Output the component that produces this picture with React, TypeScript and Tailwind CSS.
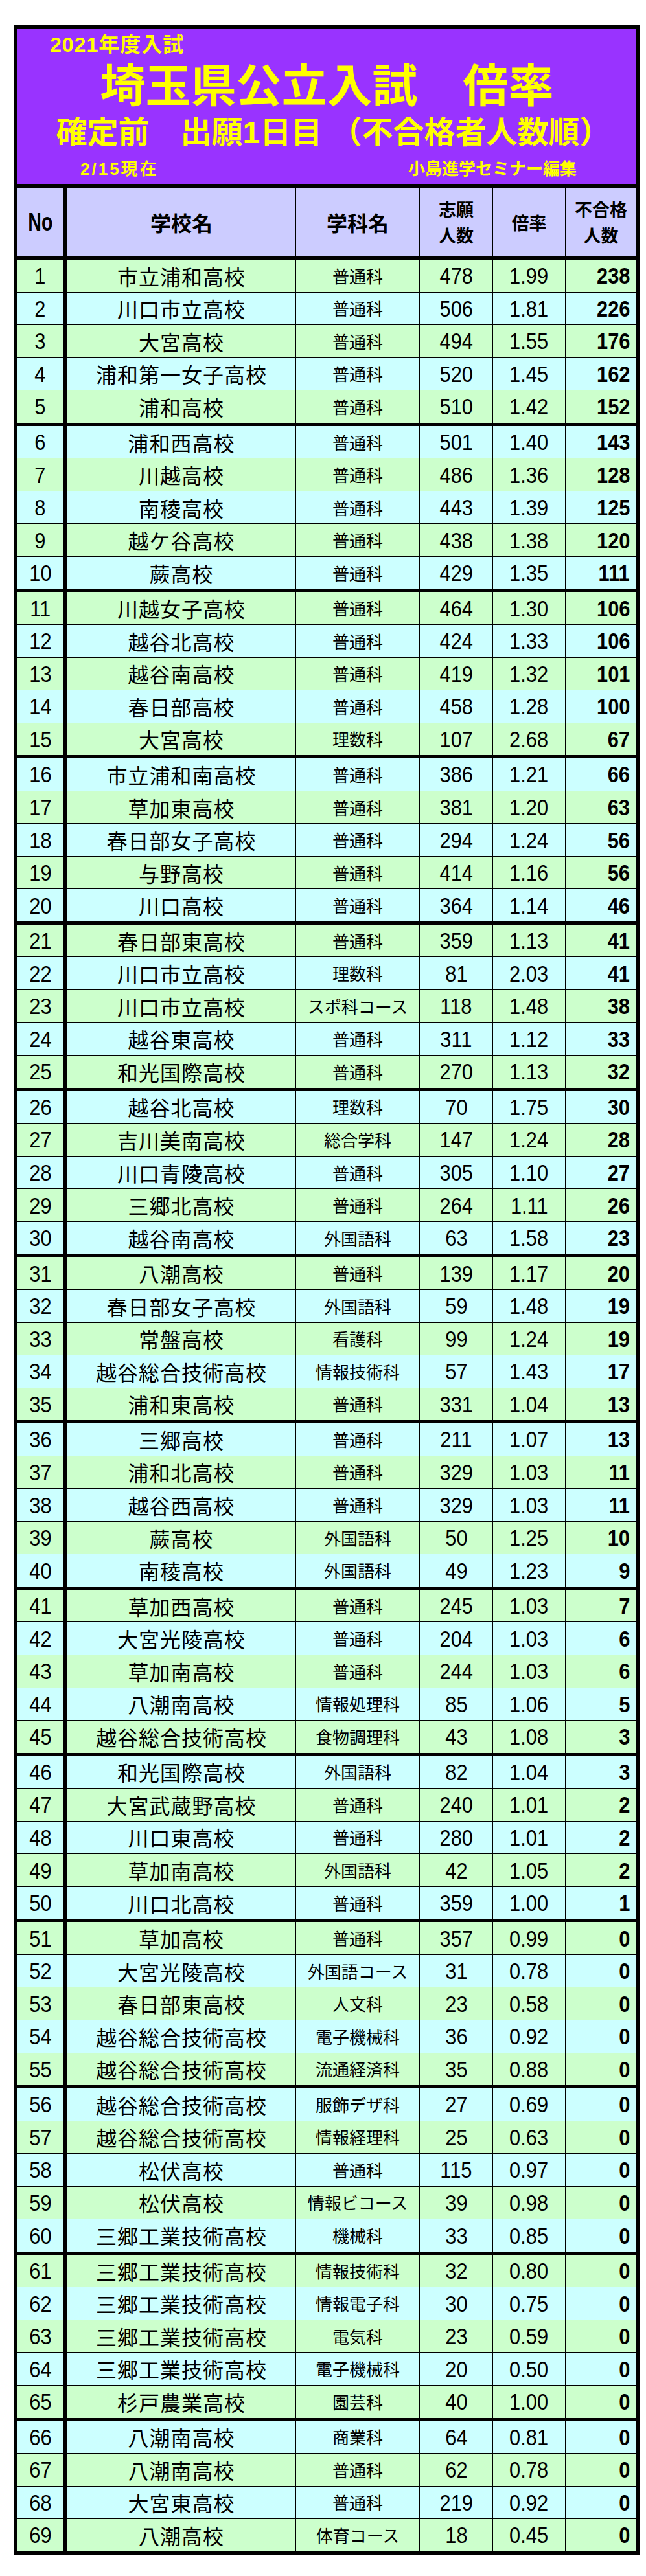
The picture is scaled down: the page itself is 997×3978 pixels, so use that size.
type Row = [string, string, number, string, number]

const rows: Row[] = [
  ["市立浦和高校", "普通科", 478, "1.99", 238],
  ["川口市立高校", "普通科", 506, "1.81", 226],
  ["大宮高校", "普通科", 494, "1.55", 176],
  ["浦和第一女子高校", "普通科", 520, "1.45", 162],
  ["浦和高校", "普通科", 510, "1.42", 152],
  ["浦和西高校", "普通科", 501, "1.40", 143],
  ["川越高校", "普通科", 486, "1.36", 128],
  ["南稜高校", "普通科", 443, "1.39", 125],
  ["越ケ谷高校", "普通科", 438, "1.38", 120],
  ["蕨高校", "普通科", 429, "1.35", 111],
  ["川越女子高校", "普通科", 464, "1.30", 106],
  ["越谷北高校", "普通科", 424, "1.33", 106],
  ["越谷南高校", "普通科", 419, "1.32", 101],
  ["春日部高校", "普通科", 458, "1.28", 100],
  ["大宮高校", "理数科", 107, "2.68", 67],
  ["市立浦和南高校", "普通科", 386, "1.21", 66],
  ["草加東高校", "普通科", 381, "1.20", 63],
  ["春日部女子高校", "普通科", 294, "1.24", 56],
  ["与野高校", "普通科", 414, "1.16", 56],
  ["川口高校", "普通科", 364, "1.14", 46],
  ["春日部東高校", "普通科", 359, "1.13", 41],
  ["川口市立高校", "理数科", 81, "2.03", 41],
  ["川口市立高校", "スポ科コース", 118, "1.48", 38],
  ["越谷東高校", "普通科", 311, "1.12", 33],
  ["和光国際高校", "普通科", 270, "1.13", 32],
  ["越谷北高校", "理数科", 70, "1.75", 30],
  ["吉川美南高校", "総合学科", 147, "1.24", 28],
  ["川口青陵高校", "普通科", 305, "1.10", 27],
  ["三郷北高校", "普通科", 264, "1.11", 26],
  ["越谷南高校", "外国語科", 63, "1.58", 23],
  ["八潮高校", "普通科", 139, "1.17", 20],
  ["春日部女子高校", "外国語科", 59, "1.48", 19],
  ["常盤高校", "看護科", 99, "1.24", 19],
  ["越谷総合技術高校", "情報技術科", 57, "1.43", 17],
  ["浦和東高校", "普通科", 331, "1.04", 13],
  ["三郷高校", "普通科", 211, "1.07", 13],
  ["浦和北高校", "普通科", 329, "1.03", 11],
  ["越谷西高校", "普通科", 329, "1.03", 11],
  ["蕨高校", "外国語科", 50, "1.25", 10],
  ["南稜高校", "外国語科", 49, "1.23", 9],
  ["草加西高校", "普通科", 245, "1.03", 7],
  ["大宮光陵高校", "普通科", 204, "1.03", 6],
  ["草加南高校", "普通科", 244, "1.03", 6],
  ["八潮南高校", "情報処理科", 85, "1.06", 5],
  ["越谷総合技術高校", "食物調理科", 43, "1.08", 3],
  ["和光国際高校", "外国語科", 82, "1.04", 3],
  ["大宮武蔵野高校", "普通科", 240, "1.01", 2],
  ["川口東高校", "普通科", 280, "1.01", 2],
  ["草加南高校", "外国語科", 42, "1.05", 2],
  ["川口北高校", "普通科", 359, "1.00", 1],
  ["草加高校", "普通科", 357, "0.99", 0],
  ["大宮光陵高校", "外国語コース", 31, "0.78", 0],
  ["春日部東高校", "人文科", 23, "0.58", 0],
  ["越谷総合技術高校", "電子機械科", 36, "0.92", 0],
  ["越谷総合技術高校", "流通経済科", 35, "0.88", 0],
  ["越谷総合技術高校", "服飾デザ科", 27, "0.69", 0],
  ["越谷総合技術高校", "情報経理科", 25, "0.63", 0],
  ["松伏高校", "普通科", 115, "0.97", 0],
  ["松伏高校", "情報ビコース", 39, "0.98", 0],
  ["三郷工業技術高校", "機械科", 33, "0.85", 0],
  ["三郷工業技術高校", "情報技術科", 32, "0.80", 0],
  ["三郷工業技術高校", "情報電子科", 30, "0.75", 0],
  ["三郷工業技術高校", "電気科", 23, "0.59", 0],
  ["三郷工業技術高校", "電子機械科", 20, "0.50", 0],
  ["杉戸農業高校", "園芸科", 40, "1.00", 0],
  ["八潮南高校", "商業科", 64, "0.81", 0],
  ["八潮南高校", "普通科", 62, "0.78", 0],
  ["大宮東高校", "普通科", 219, "0.92", 0],
  ["八潮高校", "体育コース", 18, "0.45", 0],
]

const Num = ({ children, bold }: { children: React.ReactNode; bold?: boolean }) => (
  <span
    className={`inline-block font-['Liberation_Sans',Arial,sans-serif] text-[35px] leading-none scale-x-[0.88] ${
      bold ? "font-bold origin-right" : "font-normal"
    }`}
  >
    {children}
  </span>
)

// purple title block
const Header = () => (
  <div className="h-[246px] border-b-[7px] border-black bg-[#9933ff] text-[#ffff00] font-bold font-['Liberation_Sans','Noto_Sans_CJK_JP',sans-serif]">
    <div className="pl-[50px] pt-[8px] text-[32px] leading-none tracking-[1px]">2021年度入試</div>
    <div className="mt-[14px] text-center text-[70px] leading-none">埼玉県公立入試　倍率</div>
    <div className="mt-[12px] text-center text-[48px] leading-none pl-[20px]">確定前　出願1日目 （不合格者人数順）</div>
    <div className="mt-[19px] flex justify-between pl-[97px] pr-[92px] text-[26px] leading-none">
      <span className="tracking-[3px]">2/15現在</span>
      <span>小島進学セミナー編集</span>
    </div>
  </div>
)

const cols = "grid grid-cols-[70px_359px_191px_113px_112px_110px]"

const TableHead = () => (
  <div className={`${cols} h-[110px] border-b-[6px] border-black bg-[#ccccff] font-bold font-['Noto_Sans_CJK_JP',sans-serif] text-black`}>
    <div className="flex items-center justify-center">
      <span className="inline-block scale-x-[0.75] font-['Liberation_Sans',Arial,sans-serif] text-[38px] leading-none">No</span>
    </div>
    <div className="flex items-center justify-center border-l-[7px] border-black text-[32px] leading-none">学校名</div>
    <div className="flex items-center justify-center border-l border-black text-[32px] leading-none">学科名</div>
    <div className="flex flex-col items-center justify-center border-l border-black text-[27px] leading-[40px]">
      <span>志願</span>
      <span>人数</span>
    </div>
    <div className="flex items-center justify-center border-l border-black text-[27px] leading-none">倍率</div>
    <div className="flex flex-col items-center justify-center border-l border-black text-[27px] leading-[40px]">
      <span>不合格</span>
      <span>人数</span>
    </div>
  </div>
)

const DataRow = ({ no, row, last }: { no: number; row: Row; last: boolean }) => {
  const [school, dept, applicants, ratio, failed] = row
  const bg = no % 2 === 1 ? "bg-[#ccffcc]" : "bg-[#ccffff]"
  // every fifth row closes its block with a heavy rule
  const edge = last
    ? "h-[49.55px]"
    : no % 5 === 0
      ? "h-[54.55px] border-b-[5px] border-black"
      : "h-[50.55px] border-b border-black"

  return (
    <div className={`${cols} ${bg} ${edge} text-black`}>
      <div className="flex items-center justify-center">
        <Num>{no}</Num>
      </div>
      <div className="flex items-center justify-center border-l-[7px] border-black font-['Noto_Sans_CJK_JP',sans-serif] text-[32px] leading-none tracking-[1px]">
        {school}
      </div>
      <div className="flex items-center justify-center border-l border-black font-['Noto_Sans_CJK_JP',sans-serif] text-[26px] leading-none">
        {dept}
      </div>
      <div className="flex items-center justify-center border-l border-black">
        <Num>{applicants}</Num>
      </div>
      <div className="flex items-center justify-center border-l border-black">
        <Num>{ratio}</Num>
      </div>
      <div className="flex items-center justify-end border-l border-black pr-[10px]">
        <Num bold>{failed}</Num>
      </div>
    </div>
  )
}

export default function App() {
  return (
    <div className="min-h-[3978px] bg-white pt-[38px] pl-[21px]">
      <div className="w-[967px] border-x-[6px] border-t-[7px] border-b-[6px] border-black">
        <Header />
        <TableHead />
        {rows.map((row, i) => (
          <DataRow key={i} no={i + 1} row={row} last={i === rows.length - 1} />
        ))}
      </div>
    </div>
  )
}
